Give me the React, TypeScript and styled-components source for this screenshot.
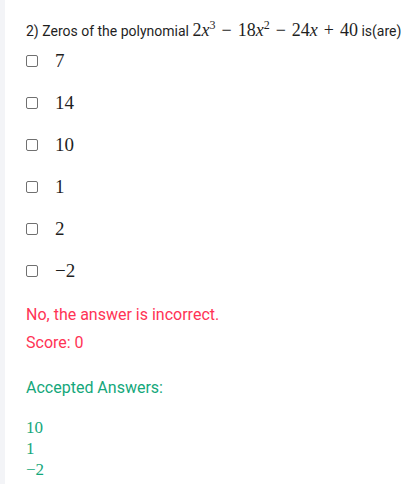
import * as React from "react";
import styled, { createGlobalStyle } from "styled-components";

const GlobalStyle = createGlobalStyle`
  html, body {
    margin: 0;
    padding: 0;
    background: #ffffff;
  }
  body {
    font-family: Roboto, "Liberation Sans", Arial, sans-serif;
    color: #1f1f1f;
  }
`;

const options: React.ReactNode[] = ["7", "14", "10", "1", "2", "\u22122"];
const accepted: string[] = ["10", "1", "\u22122"];

const App = () => {
  return (
    <>
      <GlobalStyle />
      <Page>
        <Strip />
        <Content>
          <Question>
            2) Zeros of the polynomial{" "}
            <MathExpr>
              2<Var>x</Var>
              <Sup>3</Sup>
              <Op>&minus;</Op>18<Var>x</Var>
              <Sup>2</Sup>
              <Op>&minus;</Op>24<Var>x</Var>
              <Op>+</Op>40
            </MathExpr>{" "}
            is(are)
          </Question>
          <OptionList>
            {options.map((opt, i) => (
              <OptionRow key={i}>
                <Box type="checkbox" />
                <MathValue>{opt}</MathValue>
              </OptionRow>
            ))}
          </OptionList>
          <Feedback>No, the answer is incorrect.</Feedback>
          <Score>Score: 0</Score>
          <AcceptedTitle>Accepted Answers:</AcceptedTitle>
          <AcceptedList>
            {accepted.map((a) => (
              <AcceptedItem key={a}>{a}</AcceptedItem>
            ))}
          </AcceptedList>
        </Content>
      </Page>
    </>
  );
};

const Page = styled.div`
  display: flex;
  min-height: 484px;
`;

const Strip = styled.div`
  width: 5px;
  flex-shrink: 0;
  background: #f3f4f7;
`;

const Content = styled.div`
  flex: 1;
  padding: 20px 0 0 21px;
`;

const Question = styled.div`
  font-size: 14px;
  line-height: 20px;
  color: #1f1f1f;
  white-space: nowrap;
`;

const MathExpr = styled.span`
  font-family: "Liberation Serif", "DejaVu Serif", serif;
  font-size: 18px;
`;

const Var = styled.i`
  font-style: italic;
`;

const Sup = styled.sup`
  font-size: 12px;
  vertical-align: 7px;
  line-height: 0;
`;

const Op = styled.span`
  margin: 0 6px;
`;

const OptionList = styled.div`
  display: flex;
  flex-direction: column;
  gap: 18px;
  margin-top: 8px;
`;

const OptionRow = styled.label`
  display: flex;
  align-items: center;
  height: 24px;
`;

const Box = styled.input`
  appearance: none;
  width: 12px;
  height: 12px;
  margin: 0 17px 0 0;
  border: 1px solid #707070;
  border-radius: 2px;
  box-sizing: border-box;
  background: #fff;
`;

const MathValue = styled.span`
  font-family: "Liberation Serif", "DejaVu Serif", serif;
  font-size: 19px;
  color: #1f1f1f;
`;

const Feedback = styled.div`
  margin-top: 22px;
  font-size: 16px;
  line-height: 20px;
  color: #ff3355;
`;

const Score = styled.div`
  margin-top: 8px;
  font-size: 16px;
  line-height: 20px;
  color: #ff3355;
`;

const AcceptedTitle = styled.div`
  margin-top: 25px;
  font-size: 16px;
  line-height: 20px;
  color: #14a77b;
`;

const AcceptedList = styled.div`
  margin-top: 19px;
  display: flex;
  flex-direction: column;
`;

const AcceptedItem = styled.div`
  font-family: "Liberation Serif", "DejaVu Serif", serif;
  font-size: 17px;
  line-height: 21px;
  color: #14a77b;
`;

export default App;
